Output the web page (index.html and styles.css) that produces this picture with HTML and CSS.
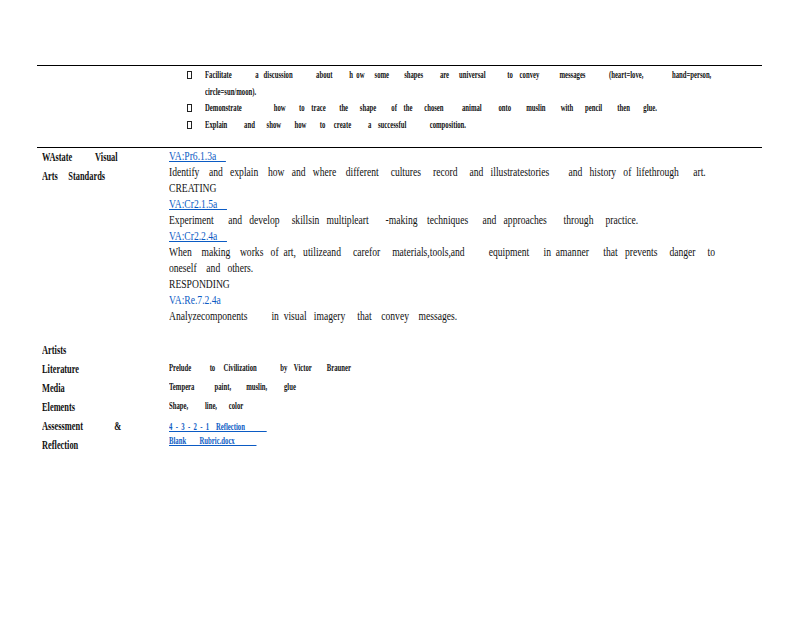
FILE: index.html
```html
<!DOCTYPE html>
<html lang="en">
<head>
<meta charset="utf-8">
<title>Lesson plan</title>
<link rel="stylesheet" href="styles.css">
</head>
<body>
<main class="page">
  <section class="row row-top">
    <div class="label"></div>
    <ul class="tasks">
      <li class="task"><span class="box"></span><p class="small">Facilitate              a   discussion              about          h  ow      some         shapes          are      universal             to    convey            messages              (heart=love,                 hand=person,
circle=sun/moon).</p></li>
      <li class="task"><span class="box"></span><p class="small">Demonstrate                   how        to    trace        the       shape         of    the       chosen           animal          onto         muslin         with       pencil         then        glue.</p></li>
      <li class="task"><span class="box"></span><p class="small">Explain          and       show        how        to     create          a    successful              composition.</p></li>
    </ul>
  </section>
  <section class="row row-standards">
    <div class="label">
      <p class="head">WAstate           Visual</p>
      <p class="head">Arts     Standards</p>
    </div>
    <div class="body">
      <p class="link">VA:Pr6.1.3a    </p>
      <p class="text">Identify    and   explain    how   and   where    different     cultures     record     and   illustratestories        and   history   of  lifethrough      art.</p>
      <p class="text">CREATING</p>
      <p class="link">VA:Cr2.1.5a    </p>
      <p class="text">Experiment      and   develop     skillsin   multipleart       -making    techniques      and   approaches       through     practice.</p>
      <p class="link">VA:Cr2.2.4a    </p>
      <p class="text">When    making    works   of  art,   utilizeand     carefor     materials,tools,and          equipment      in  amanner      that   prevents     danger     to
oneself    and   others.</p>
      <p class="text">RESPONDING</p>
      <p class="link-plain">VA:Re.7.2.4a</p>
      <p class="text">Analyzecomponents          in  visual   imagery     that    convey    messages.</p>
    </div>
  </section>
  <section class="row row-meta">
    <p class="head">Artists</p>
    <p class="small"></p>
    <p class="head">Literature</p>
    <p class="small">Prelude           to     Civilization              by    Victor         Brauner</p>
    <p class="head">Media</p>
    <p class="small">Tempera            paint,         muslin,          glue</p>
    <p class="head">Elements</p>
    <p class="small">Shape,          line,       color</p>
    <p class="head">Assessment               &amp;<br>Reflection</p>
    <div class="refs">
      <p class="small link-small">4  -  3  -  2  -  1    Reflection             </p>
      <p class="small link-small">Blank        Rubric.docx             </p>
    </div>
  </section>
</main>
</body>
</html>
```
FILE: styles.css
```css
* { box-sizing: border-box; }
html, body { margin: 0; padding: 0; background: #fff; }
body { font-family: "Liberation Serif", serif; color: #111; overflow: hidden; }
p, ul, li { margin: 0; padding: 0; list-style: none; }
.page { width: 800px; height: 618px; padding: 65px 38px 0 37px; }
.row { display: grid; grid-template-columns: 132px 1fr; }
.row-top { border-top: 1px solid #000; border-bottom: 1px solid #000; height: 83px; }
.tasks { padding: 1px 0 0 18px; }
.task { display: flex; gap: 13px; }
.box { flex: none; width: 5px; height: 8px; margin-top: 4px; border: 1px solid #222; }
.small, .head, .text, .link, .link-plain { white-space: pre; transform-origin: 0 0; }
.small { font-size: 10px; font-weight: bold; line-height: 16.5px; transform: scaleX(.67); }
.head { font-size: 12.5px; font-weight: bold; line-height: 19px; margin-left: 5px; transform: scaleX(.67); }
.text, .link, .link-plain { font-size: 12px; line-height: 16px; transform: scaleX(.8); }
.link, .link-plain { color: #0b5bc4; }
.link { text-decoration: underline; text-underline-offset: 1px; }
.row-meta { margin-top: 17px; }
.link-small { color: #0b5bc4; text-decoration: underline; line-height: 14px; }
.refs { padding-top: 3px; }
```
